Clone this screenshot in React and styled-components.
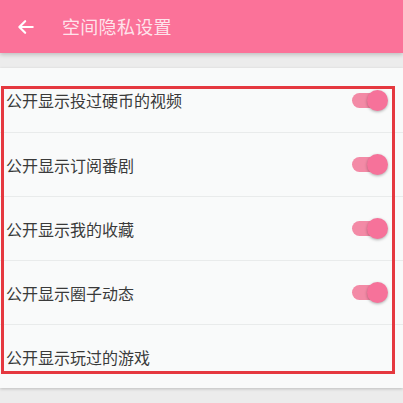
import React from 'react';
import styled, { createGlobalStyle } from 'styled-components';

const Global = createGlobalStyle`
  html, body { margin: 0; padding: 0; }
  body {
    background: #ededed;
    font-family: Roboto, "Noto Sans CJK SC", "Noto Sans", sans-serif;
  }
`;

const Page = styled.div`
  position: relative;
  width: 403px;
  height: 403px;
  overflow: hidden;
  background: #ececec;
`;

const Header = styled.div`
  display: flex;
  align-items: center;
  height: 53px;
  background: #fb7299;
  box-shadow: 0 2px 4px rgba(0, 0, 0, 0.18);
  position: relative;
  z-index: 1;
`;

const Back = styled.div`
  width: 48px;
  display: flex;
  justify-content: center;
  padding-left: 2px;
  margin-right: 12px;
`;

const Title = styled.div`
  color: rgba(255, 255, 255, 0.82);
  font-size: 18px;
  letter-spacing: 0.3px;
  margin-top: -2px;
`;

const Card = styled.div`
  margin-top: 15px;
  background: #f9fafa;
  box-shadow: 0 1px 3px rgba(0, 0, 0, 0.2);
`;

const Row = styled.div`
  display: flex;
  align-items: center;
  justify-content: space-between;
  height: 64px;
  padding: 0 17px 0 6px;
  box-sizing: border-box;
  border-top: ${p => (p.first ? 'none' : '1px solid #e9ebeb')};
`;

const Label = styled.div`
  font-size: 16px;
  color: #3a3a3a;
`;

const Switch = styled.div`
  position: relative;
  width: 34px;
  height: 15px;
  border-radius: 8px;
  background: #f38aa6;
`;

const Thumb = styled.div`
  position: absolute;
  right: -2px;
  top: -3px;
  width: 21px;
  height: 21px;
  border-radius: 50%;
  background: #f6729a;
  box-shadow: 0 1px 3px rgba(0, 0, 0, 0.3);
`;

const Outline = styled.div`
  position: absolute;
  left: 1px;
  top: 86px;
  width: 388px;
  height: 282px;
  border: 3px solid #e5383f;
  pointer-events: none;
`;

const items = [
  { label: '公开显示投过硬币的视频', on: true },
  { label: '公开显示订阅番剧', on: true },
  { label: '公开显示我的收藏', on: true },
  { label: '公开显示圈子动态', on: true },
  { label: '公开显示玩过的游戏', on: false },
];

export default function App() {
  return (
    <Page>
      <Global />
      <Header>
        <Back>
          <svg width="20" height="20" viewBox="0 0 24 24" fill="none" stroke="#fff" strokeWidth="2.6" strokeLinecap="round" strokeLinejoin="round">
            <path d="M20 12H5" />
            <path d="M11 5l-7 7 7 7" />
          </svg>
        </Back>
        <Title>空间隐私设置</Title>
      </Header>
      <Card>
        {items.map((it, i) => (
          <Row key={i} first={i === 0}>
            <Label>{it.label}</Label>
            {it.on && (
              <Switch>
                <Thumb />
              </Switch>
            )}
          </Row>
        ))}
      </Card>
      <Outline />
    </Page>
  );
}
